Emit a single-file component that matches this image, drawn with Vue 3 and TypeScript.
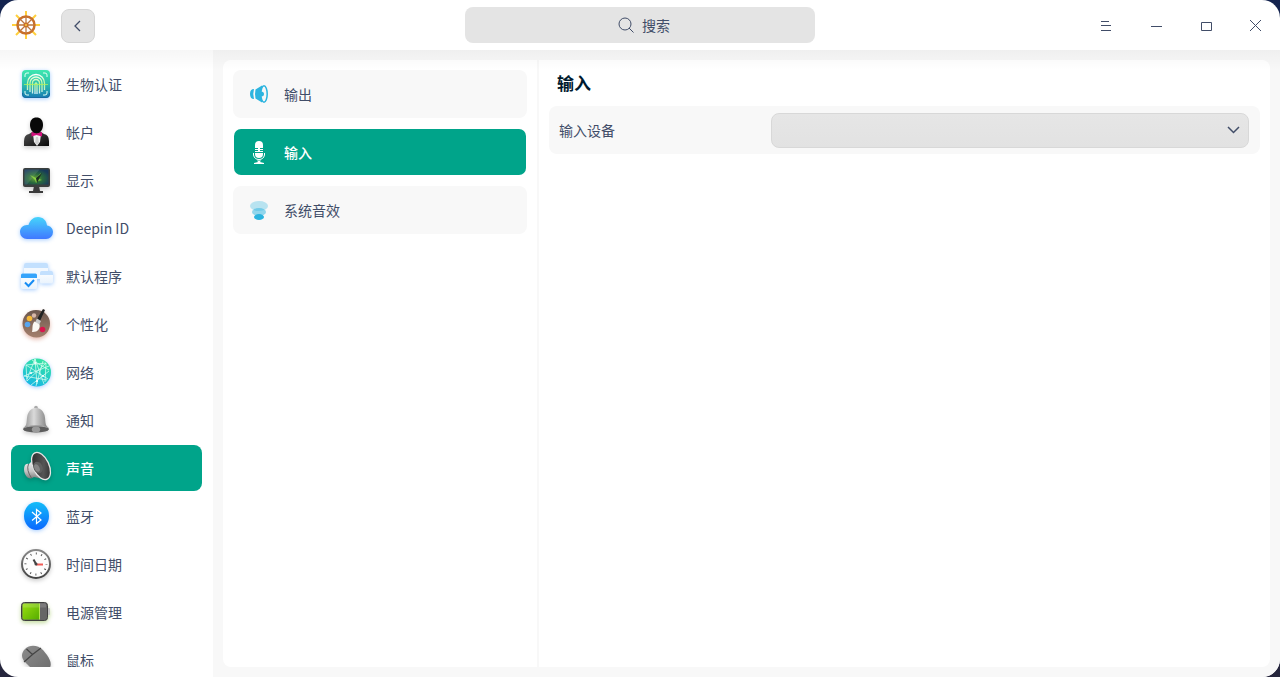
<script setup lang="ts">
import { ref } from 'vue'

interface Entry {
  id: string
  label: string
}

const modules: Entry[] = [
  { id: 'biometric', label: '生物认证' },
  { id: 'account', label: '帐户' },
  { id: 'display', label: '显示' },
  { id: 'cloud', label: 'Deepin ID' },
  { id: 'defapp', label: '默认程序' },
  { id: 'palette', label: '个性化' },
  { id: 'network', label: '网络' },
  { id: 'bell', label: '通知' },
  { id: 'sound', label: '声音' },
  { id: 'bluetooth', label: '蓝牙' },
  { id: 'clock', label: '时间日期' },
  { id: 'battery', label: '电源管理' },
  { id: 'mouse', label: '鼠标' },
]

const pages: Entry[] = [
  { id: 'output', label: '输出' },
  { id: 'input', label: '输入' },
  { id: 'effects', label: '系统音效' },
]

const activeModule = ref('sound')
const activePage = ref('input')
const device = ref('')
</script>

<template>
  <div class="window">
    <svg class="sprite" aria-hidden="true">
      <defs>
        <linearGradient id="g-bio" x1="0" y1="0" x2="0" y2="1"><stop offset="0" stop-color="#3fe8b0" /><stop offset=".5" stop-color="#2cc0ac" /><stop offset="1" stop-color="#1779b4" /></linearGradient>
        <linearGradient id="g-print" x1="0" y1="0" x2="0" y2="1"><stop offset="0" stop-color="#fff" /><stop offset=".5" stop-color="#b5f796" /><stop offset="1" stop-color="#d6efff" /></linearGradient>
        <linearGradient id="g-suit" x1="0" y1="0" x2="1" y2="1"><stop offset="0" stop-color="#555" /><stop offset="1" stop-color="#080808" /></linearGradient>
        <radialGradient id="g-screen" cx=".45" cy=".6" r=".65"><stop offset="0" stop-color="#6ba33b" /><stop offset=".45" stop-color="#2a6b3c" /><stop offset="1" stop-color="#17395a" /></radialGradient>
        <linearGradient id="g-cloud" x1="0" y1="0" x2="0" y2="1"><stop offset="0" stop-color="#45d5fb" /><stop offset="1" stop-color="#4078ff" /></linearGradient>
        <linearGradient id="g-pane" x1="0" y1="0" x2="0" y2="1"><stop offset="0" stop-color="#fff" /><stop offset="1" stop-color="#e9f3fd" /></linearGradient>
        <linearGradient id="g-wood" x1="0" y1="0" x2="0" y2="1"><stop offset="0" stop-color="#6b574e" /><stop offset="1" stop-color="#a4806c" /></linearGradient>
        <linearGradient id="g-net" x1=".7" y1="0" x2=".3" y2="1"><stop offset="0" stop-color="#35e5a0" /><stop offset="1" stop-color="#16b7e5" /></linearGradient>
        <linearGradient id="g-bell" x1="0" y1="0" x2="1" y2="0"><stop offset="0" stop-color="#8c8c8c" /><stop offset=".42" stop-color="#dadada" /><stop offset="1" stop-color="#777" /></linearGradient>
        <linearGradient id="g-cone" x1="0" y1="0" x2="1" y2="1"><stop offset="0" stop-color="#222" /><stop offset=".6" stop-color="#555" /><stop offset="1" stop-color="#222" /></linearGradient>
        <linearGradient id="g-metal" x1="0" y1="0" x2="0" y2="1"><stop offset="0" stop-color="#f2f2f2" /><stop offset=".6" stop-color="#c4c4c4" /><stop offset="1" stop-color="#777" /></linearGradient>
        <linearGradient id="g-blue" x1="0" y1="0" x2="0" y2="1"><stop offset="0" stop-color="#12bdf8" /><stop offset="1" stop-color="#0a67ff" /></linearGradient>
        <linearGradient id="g-rim" x1="0" y1="0" x2="0" y2="1"><stop offset="0" stop-color="#888" /><stop offset="1" stop-color="#444" /></linearGradient>
        <linearGradient id="g-charge" x1="0" y1="0" x2="1" y2="1"><stop offset="0" stop-color="#9be010" /><stop offset="1" stop-color="#56ad00" /></linearGradient>
        <linearGradient id="g-shell" x1="0" y1="0" x2="1" y2="1"><stop offset="0" stop-color="#8c8c8c" /><stop offset="1" stop-color="#6c6c6c" /></linearGradient>
      </defs>

      <symbol id="biometric" viewBox="0 0 36 36">
        <rect x="4" y="4" width="28" height="28" rx="4" fill="url(#g-bio)" />
        <path d="M4.500 27v1q0 3.500 3.500 3.500h20q3.500 0 3.500-3.500v-1" fill="none" stroke="#176a9f" />
        <path d="M7 11V9q0-2 2-2h2M25 7h2q2 0 2 2v2M7 25v2q0 2 2 2h2M25 29h2q2 0 2-2v-2" fill="none" stroke="#dffff3" />
        <path d="M9.500 24v-7a8.500 8.500 0 0 1 17 0v7M12 26v-9a6 6 0 0 1 12 0v9M14.500 27.500V17a3.500 3.500 0 0 1 7 0v10.500M17 28V18q1-2 2 0v10" fill="none" stroke="url(#g-print)" stroke-width="1.300" />
        <path d="M6 18.500h24" stroke="#b6f35b" stroke-width="1" opacity=".75" />
      </symbol>

      <symbol id="account" viewBox="0 0 36 36">
        <path d="M6 32v-5q0-6 5-7l5-3h5l5 3q5 1 5 7v5z" fill="url(#g-suit)" />
        <path d="M15 20h8l-1 8-3 4-3-4z" fill="#f1f1f1" />
        <path d="M18 23h2l1 6-2 2-2-2z" fill="#d0d0d0" />
        <path d="M12 11c0-5 2.500-7.500 6.500-7.500S25 6 25 11c0 4-2.500 8.500-6.500 8.500S12 15 12 11z" fill="#080808" />
        <path d="M13.500 18l5 1.500 5.500-1.500v4.500L18.500 21l-5 1.500z" fill="#d3107c" />
      </symbol>

      <symbol id="display" viewBox="0 0 36 36">
        <path d="M16 24h5l1 5h3v2H11v-2h4z" fill="#3b3b3b" />
        <rect x="5" y="6" width="27" height="19" rx="2" fill="#3b3f3d" />
        <rect x="6.500" y="7.500" width="24" height="15" fill="url(#g-screen)" />
        <path d="M6.500 7.500h15L9 22.500H6.500z" fill="#fff" opacity=".1" />
        <path d="M12 13l6 3 5-5-2 6 3 1-4 1-2 2-1-3z" fill="#8fd944" opacity=".85" />
        <path d="M18 16l6-5-3 6-2 4z" fill="#192e20" />
      </symbol>

      <symbol id="cloud" viewBox="0 0 36 36">
        <path d="M9 29a7 7 0 0 1-7-7c0-4 3-7 7-7h1.500C12 10 15.500 7 20 7c5 0 8.500 3.500 9 8.500 3.500.5 6 3 6 6.500a7 7 0 0 1-7 7z" fill="url(#g-cloud)" />
      </symbol>

      <symbol id="defapp" viewBox="0 0 36 36">
        <rect x="6" y="5" width="24" height="16" rx="2" fill="#f3f8fe" />
        <path d="M6 10V7q0-2 2-2h20q2 0 2 2v3z" fill="#c3e0fe" />
        <rect x="22" y="13" width="13" height="12.500" rx="1.500" fill="url(#g-pane)" />
        <path d="M22 17v-2.500q0-1.500 1.500-1.500h10q1.500 0 1.500 1.500V17z" fill="#c3e0fe" />
        <rect x="3" y="15.500" width="16" height="15.500" rx="1.500" fill="url(#g-pane)" />
        <path d="M3 20v-3q0-1.500 1.500-1.500h13q1.500 0 1.500 1.500v3z" fill="#36a4fb" />
        <path d="M7 24.500l3.500 3.500 5.500-6" fill="none" stroke="#168cf4" stroke-width="2" />
      </symbol>

      <symbol id="palette" viewBox="0 0 36 36">
        <path d="M18 4C10 4 4.500 10 4.500 17.500S10 31.500 18.500 31.500 32 25 32 17.500 26 4 18 4z" fill="url(#g-wood)" />
        <circle cx="16" cy="9.500" r="2.200" fill="#d7b7a9" />
        <circle cx="11.500" cy="12.500" r="2.800" fill="#f5b837" />
        <circle cx="9.500" cy="18.500" r="2.800" fill="#58a5ef" />
        <circle cx="24.500" cy="23.500" r="2.800" fill="#da164d" />
        <path d="M25 3l2 1-5 11-3-2z" fill="#222" />
        <path d="M19 12.500l4 2.500-2 4-4-2.500z" fill="#c9c9c9" />
        <path d="M16.500 15.500l5 3c1 4-2 8-7.500 7.500 1-2-.5-7.500 2.500-10.500z" fill="#fbf8f2" />
      </symbol>

      <symbol id="network" viewBox="0 0 36 36">
        <circle cx="19" cy="18.500" r="14" fill="url(#g-net)" />
        <path d="M8 11l20-2M8 11l22 14M6 22l25-10M6 22l23 4M17 5l-8 20M17 5l9 25M17 5l2 25M25 7l-7 25M8 11l1 16M28 9l-1 19M13 31l18-14M9 27l19-18M14 6l17 10" fill="none" stroke="#dcfff1" stroke-width=".8" opacity=".9" />
        <g fill="#fff"><circle cx="17" cy="9" r="1" /><circle cx="25" cy="22" r="1" /><circle cx="13" cy="19" r="1" /><circle cx="19" cy="27" r="1" /></g>
      </symbol>

      <symbol id="bell" viewBox="0 0 36 36">
        <circle cx="18" cy="5.500" r="1.800" fill="#aaa" />
        <path d="M5 27l3-4c1-3 .5-6 1.500-10C11 8.500 14 6 18 6s7 2.500 8.500 7c1 4 .5 7 1.500 10l3 4z" fill="url(#g-bell)" />
        <path d="M4.800 27q1-2 3.200-2.500 10-2 20 0 2.200.5 3.200 2.500-1 2-4 2.500-9 2-18.400 0-3-.5-4-2.500z" fill="#5d5d5d" />
        <path d="M5 26.500q2-2.500 13-2.500t13 2.500" fill="none" stroke="#bdbdbd" stroke-width=".8" />
        <ellipse cx="18" cy="27.500" rx="4.200" ry="3" fill="#9a9a9a" />
      </symbol>

      <symbol id="sound" viewBox="0 0 36 36">
        <path d="M7 15q2-2 4-1l4-4 10 19-9-2-3 1.500q-4 0-6-4.500-2-5 0-9z" fill="url(#g-metal)" />
        <path d="M10.500 14q-2.500 6 3 14" fill="none" stroke="#666" />
        <ellipse cx="23" cy="16" rx="8" ry="14.500" transform="rotate(-25 23 16)" fill="url(#g-cone)" stroke="#e6e6e6" stroke-width="1.300" />
        <ellipse cx="20" cy="17.500" rx="4.500" ry="6" transform="rotate(-25 20 17.500)" fill="#5f5f5f" />
        <ellipse cx="19" cy="18" rx="2.500" ry="4" transform="rotate(-25 19 18)" fill="#858585" />
      </symbol>

      <symbol id="bluetooth" viewBox="0 0 36 36">
        <ellipse cx="18.500" cy="18" rx="12.500" ry="14" fill="url(#g-blue)" />
        <path d="M14 14l9 8-4.500 3.500v-14L23 15l-9 7.500" fill="none" stroke="#fff" stroke-width="1.200" />
      </symbol>

      <symbol id="clock" viewBox="0 0 36 36">
        <circle cx="18" cy="18" r="14" fill="#fdfdfd" stroke="url(#g-rim)" stroke-width="2" />
        <circle cx="18" cy="18" r="10.500" fill="none" stroke="#555" stroke-width="2" stroke-dasharray="1 4.498" stroke-dashoffset=".5" />
        <path d="M15.500 13.500l2.500 4.500" stroke="#444" stroke-width="2" />
        <path d="M18 18.500h7" stroke="#f15b56" stroke-width="2" />
        <circle cx="18" cy="18" r="1.500" fill="#444" />
      </symbol>

      <symbol id="battery" viewBox="0 0 36 36">
        <rect x="29" y="14" width="3" height="7" rx="1" fill="#c5c5c5" />
        <rect x="3.500" y="8.500" width="26" height="18" rx="3" fill="#666" stroke="#404040" />
        <path d="M4.500 11q0-1.500 1.500-1.500h15v16H6q-1.500 0-1.500-1.500z" fill="url(#g-charge)" />
        <path d="M5 9.500h23v4H5z" fill="#fff" opacity=".15" />
        <path d="M21.500 9.500v16" stroke="#b5e751" />
      </symbol>

      <symbol id="mouse" viewBox="0 0 36 36">
        <path d="M7 7c5-5 13-4 18 1l4 5c4 6 5 10 2 14-4 6-13 4-19-2l-5-5C3 16 3 11 7 7z" fill="url(#g-shell)" />
        <path d="M6 20l8.500-7.500L23 6M8.500 7l6 5.500M14 13l1.500-1.500" fill="none" stroke="#454545" stroke-width="1.200" />
      </symbol>

      <symbol id="output" viewBox="0 0 24 24">
        <path d="M7 7q-4 0-4 5t4 5q-1.500-5 0-10z" fill="#2cb4df" />
        <path d="M8.500 7.500L15 3.500v17l-6.500-4q-1-4.500 0-9z" fill="#2cb4df" />
        <ellipse cx="17" cy="12" rx="3.200" ry="8.200" fill="#f7f7f7" stroke="#2cb4df" stroke-width="1.500" />
        <path d="M14 9.500q3 0 3 2.500t-3 2.500z" fill="#2cb4df" />
      </symbol>

      <symbol id="input" viewBox="0 0 24 24">
        <path d="M8 8V5q0-4 4-4t4 4v3h-3v1h3v1h-3v1h3v1H8v-1h3v-1H8V9h3V8z" fill="#fff" />
        <path d="M8 13h8v1q0 4-4 4t-4-4z" fill="#fff" />
        <path d="M6.500 13v2q1 4.500 5.500 4.500t5.500-4.500v-2" fill="none" stroke="#fff" />
        <path d="M10 20.500h4l-1 1.500 4 1v1H7v-1l4-1z" fill="#fff" />
      </symbol>

      <symbol id="effects" viewBox="0 0 24 24">
        <ellipse cx="12" cy="8" rx="9" ry="5" fill="#b8e3f0" />
        <ellipse cx="12" cy="14" rx="7" ry="4" fill="#2cb4df" opacity=".5" />
        <ellipse cx="12" cy="19" rx="5" ry="3" fill="#2cb4df" />
      </symbol>
    </svg>

    <header class="titlebar">
      <div class="start">
        <svg class="logo" viewBox="0 0 32 32" aria-hidden="true">
          <path d="M16 2v28M2 16h28M6 6l20 20M26 6L6 26" stroke="#ffd03d" stroke-width="2" />
          <circle cx="16" cy="16" r="8.500" fill="#fff" stroke="#c8712c" stroke-width="2.500" />
          <path d="M16 8v16M8 16h16M10.500 10.500l11 11M21.500 10.500l-11 11" stroke="#bd7740" stroke-width="1.300" />
          <circle cx="16" cy="16" r="2.500" fill="#c8712c" />
          <circle cx="16" cy="16" r="1" fill="#ffd03d" />
        </svg>
        <button class="back" type="button" aria-label="返回">
          <svg viewBox="0 0 16 16"><path d="M10 3L5 8l5 5" /></svg>
        </button>
      </div>
      <button class="search" type="button">
        <svg viewBox="0 0 16 16"><circle cx="7" cy="7" r="6" /><path d="M11 11l4.500 4.500" /></svg>
        <span>搜索</span>
      </button>
      <div class="controls">
        <button type="button" aria-label="菜单"><svg viewBox="0 0 16 16"><path d="M4 4.500h8M4 8.500h10M4 13.500h10" /></svg></button>
        <button type="button" aria-label="最小化"><svg viewBox="0 0 16 16"><path d="M4 9.500h11" /></svg></button>
        <button type="button" aria-label="最大化"><svg viewBox="0 0 16 16"><path d="M4.500 5.500h10v8h-10z" /></svg></button>
        <button type="button" aria-label="关闭"><svg viewBox="0 0 16 16"><path d="M3 3l11 11M14 3L3 14" /></svg></button>
      </div>
    </header>

    <div class="body">
      <nav class="sidebar">
        <button
          v-for="m in modules"
          :key="m.id"
          type="button"
          class="module"
          :class="[m.id, { active: m.id === activeModule }]"
          @click="activeModule = m.id"
        >
          <svg class="icon"><use :href="'#' + m.id" /></svg>
          <span>{{ m.label }}</span>
        </button>
      </nav>
      <main class="content">
        <div class="panel">
          <nav class="pages">
            <button
              v-for="p in pages"
              :key="p.id"
              type="button"
              class="page"
              :class="{ active: p.id === activePage }"
              @click="activePage = p.id"
            >
              <svg class="icon"><use :href="'#' + p.id" /></svg>
              <span>{{ p.label }}</span>
            </button>
          </nav>
          <section class="detail">
            <h1>输入</h1>
            <div class="row">
              <label for="device">输入设备</label>
              <div class="combo">
                <select id="device" v-model="device"><option value=""></option></select>
                <svg viewBox="0 0 16 16" aria-hidden="true"><path d="M3 5l5.500 5.500L14 5" /></svg>
              </div>
            </div>
          </section>
        </div>
      </main>
    </div>
  </div>
</template>

<style>
body {
  background: linear-gradient(#14244f, #26263d);
}
</style>

<style scoped>
.window {
  height: 100vh;
  display: flex;
  flex-direction: column;
  overflow: hidden;
  border-radius: 18px;
  background: #fff;
  color: #414d68;
  font: 14px/20px "Noto Sans CJK SC", sans-serif;
}
.sprite {
  position: absolute;
  width: 0;
  height: 0;
}
button {
  border: 0;
  padding: 0;
  margin: 0;
  background: none;
  color: inherit;
  font: inherit;
}
.titlebar {
  flex: none;
  height: 50px;
  display: grid;
  grid-template-columns: 1fr 350px 1fr;
  align-items: center;
}
.titlebar button svg {
  width: 16px;
  height: 16px;
  fill: none;
  stroke: #414d68;
}
.start {
  display: flex;
  align-items: center;
  gap: 19px;
  padding-left: 10px;
}
.logo {
  width: 32px;
  height: 32px;
}
.back {
  width: 34px;
  height: 34px;
  margin-top: 2px;
  display: grid;
  place-items: center;
  border: 1px solid #d6d6d6;
  border-radius: 8px;
  background: #e4e4e4;
}
.titlebar .back svg {
  stroke-width: 1.300;
}
.search {
  height: 36px;
  display: flex;
  align-items: center;
  justify-content: center;
  gap: 8px;
  padding-left: 8px;
  border-radius: 8px;
  background: #e4e4e4;
}
.controls {
  display: flex;
  justify-content: flex-end;
}
.controls button {
  width: 50px;
  height: 50px;
  display: grid;
  place-items: center;
}
.body {
  position: relative;
  flex: 1;
  min-height: 0;
  display: flex;
}
.body::before {
  content: "";
  position: absolute;
  inset: 0 0 auto;
  height: 20px;
  background: linear-gradient(rgba(0, 0, 0, 0.035), transparent);
  pointer-events: none;
}
.sidebar {
  flex: none;
  box-sizing: border-box;
  width: 213px;
  margin-bottom: 10px;
  padding: 11px 11px 0;
  display: flex;
  flex-direction: column;
  gap: 2px;
  overflow-y: auto;
  scrollbar-width: none;
}
.module {
  flex: none;
  height: 46px;
  display: flex;
  align-items: center;
  gap: 12px;
  padding-left: 7px;
  border-radius: 8px;
  text-align: left;
}
.module .icon {
  width: 36px;
  height: 36px;
  overflow: visible;
  filter: drop-shadow(0 2px 2px rgba(0, 0, 0, 0.2));
}
.biometric .icon,
.cloud .icon,
.defapp .icon,
.network .icon,
.bluetooth .icon {
  filter: drop-shadow(0 1px 2px rgba(30, 130, 255, 0.4));
}
.palette .icon {
  filter: drop-shadow(0 2px 2px rgba(190, 80, 50, 0.4));
}
.battery .icon {
  filter: drop-shadow(0 2px 2px rgba(110, 170, 20, 0.4));
}
.active {
  background-color: #00a48a;
  color: #fff;
  font-weight: 500;
}
.content {
  flex: 1;
  min-width: 0;
  display: flex;
  padding: 10px;
  background: #f8f8f8;
}
.panel {
  flex: 1;
  min-width: 0;
  display: flex;
  border-radius: 8px;
  background: #fff;
}
.pages {
  flex: none;
  width: 294px;
  padding: 10px;
  display: flex;
  flex-direction: column;
  gap: 10px;
  border-right: 2px solid #f8f8f8;
}
.page {
  height: 48px;
  display: flex;
  align-items: center;
  gap: 13px;
  padding: 0 13px;
  border: 1px solid transparent;
  border-radius: 8px;
  background-color: #f8f8f8;
  text-align: left;
}
.page.active {
  background-color: #00a48a;
  background-clip: padding-box;
}
.page .icon {
  width: 24px;
  height: 24px;
}
.detail {
  flex: 1;
  min-width: 0;
  padding: 0 10px;
}
h1 {
  margin: 0;
  padding: 0 8px;
  color: #001a2e;
  font-size: 17px;
  font-weight: 700;
  line-height: 46px;
}
.row {
  display: grid;
  grid-template-columns: 212px 1fr;
  align-items: center;
  height: 48px;
  padding: 0 11px 0 10px;
  border-radius: 8px;
  background: #f8f8f8;
}
.combo {
  position: relative;
  display: flex;
}
.combo select {
  flex: 1;
  height: 35px;
  appearance: none;
  border: 1px solid #d8d8d8;
  border-radius: 8px;
  background: linear-gradient(#e6e6e6, #e2e2e2);
  color: inherit;
  font: inherit;
}
.combo svg {
  position: absolute;
  right: 8px;
  top: 9px;
  width: 16px;
  height: 16px;
  fill: none;
  stroke: #414d68;
  stroke-width: 1.500;
  pointer-events: none;
}
</style>
